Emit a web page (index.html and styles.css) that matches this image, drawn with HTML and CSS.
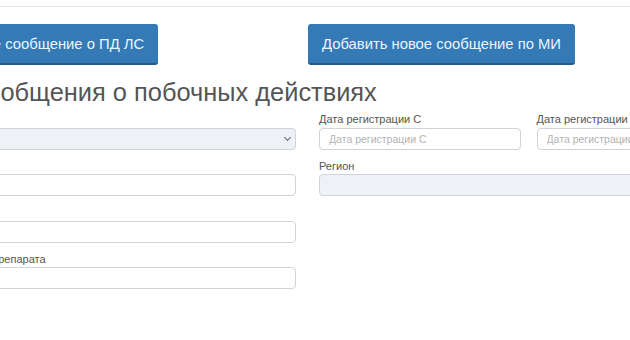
FILE: index.html
```
<!DOCTYPE html>
<html lang="ru">
<head>
  <meta charset="UTF-8">
  <title>Сообщения о побочных действиях</title>
  <link rel="stylesheet" href="styles.css">
</head>
<body>
  <div class="topbar"></div>
  <main class="page">
    <div class="actions">
      <div><button class="btn">Добавить новое сообщение о ПД ЛС</button></div>
      <div><button class="btn">Добавить новое сообщение по МИ</button></div>
    </div>
    <h2 class="title">Сообщения о побочных действиях</h2>
    <div class="filters">
      <div class="col">
        <div class="group">
          <label>Тип сообщения</label>
          <div class="select"><span class="chev"></span></div>
        </div>
        <div class="group">
          <label>Номер сообщения</label>
          <input class="field" type="text">
        </div>
        <div class="group">
          <label>Заявитель</label>
          <input class="field" type="text">
        </div>
        <div class="group">
          <label>Наименование лекар. препарата</label>
          <input class="field" type="text">
        </div>
      </div>
      <div class="col">
        <div class="pair">
          <div class="group">
            <label>Дата регистрации С</label>
            <input class="field" type="text" placeholder="Дата регистрации С">
          </div>
          <div class="group">
            <label>Дата регистрации По</label>
            <input class="field" type="text" placeholder="Дата регистрации По">
          </div>
        </div>
        <div class="group">
          <label>Регион</label>
          <div class="select"></div>
        </div>
      </div>
    </div>
  </main>
</body>
</html>
```
FILE: styles.css
```
body {
  margin: 0;
  overflow: hidden;
  background: #fff;
  font-family: "Liberation Sans", Arial, sans-serif;
  color: #555;
}
.topbar {
  height: 6px;
  border-bottom: 1px solid #e4e4e4;
}
.page {
  margin-left: -123px;
  width: 861px;
}
.actions {
  display: grid;
  grid-template-columns: 431px 1fr;
  padding-top: 17px;
}
.btn {
  height: 41px;
  padding: 0 14px;
  background: #337ab7;
  color: #eef4fa;
  border: none;
  border-bottom: 2px solid #24598a;
  border-radius: 3px;
  font-family: inherit;
  font-size: 14.8px;
}
.title {
  margin: 12px 0 0 0;
  padding-left: 91px;
  font-size: 25.4px;
  font-weight: normal;
  line-height: 30px;
  color: #555;
}
.filters {
  display: grid;
  grid-template-columns: 419px 419px;
  column-gap: 23px;
  margin-top: 5px;
}
.pair {
  display: grid;
  grid-template-columns: 1fr 1fr;
  column-gap: 16px;
}
.group {
  display: flex;
  flex-direction: column;
  margin-bottom: 9px;
}
.group label {
  font-size: 11px;
  line-height: 15.5px;
  color: #555;
}
.field, .select {
  box-sizing: border-box;
  height: 22px;
  width: 100%;
  border: 1px solid #cfd4da;
  border-radius: 4px;
  background: #fff;
  padding: 0 9px;
  font-family: inherit;
  font-size: 10.5px;
  color: #555;
}
.field::placeholder {
  color: #b3b3b3;
}
.select {
  position: relative;
  background: #eef1f6;
}
.chev {
  position: absolute;
  right: 5px;
  top: 6px;
  width: 4px;
  height: 4px;
  border-right: 1.5px solid #666;
  border-bottom: 1.5px solid #666;
  transform: rotate(45deg);
}
```
